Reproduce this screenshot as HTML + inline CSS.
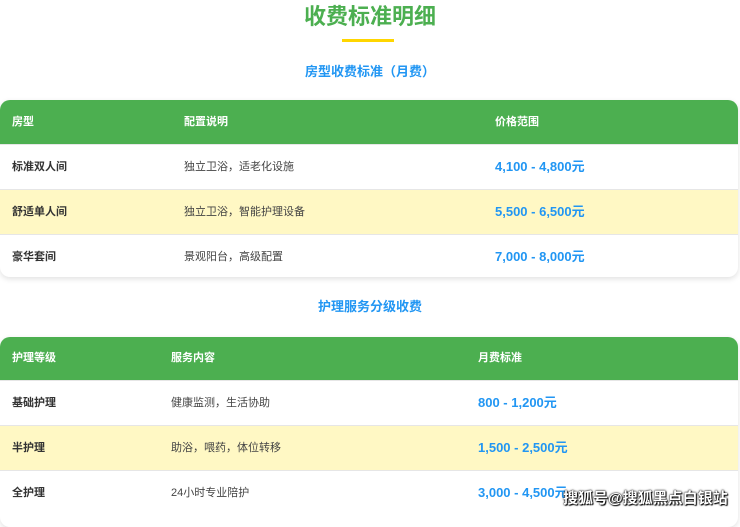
<!DOCTYPE html>
<html><head><meta charset="utf-8">
<style>
*{margin:0;padding:0;box-sizing:border-box}
body{width:740px;height:514px;overflow:hidden;background:#fff;font-family:"Liberation Sans","Noto Sans CJK SC",sans-serif;position:relative}
.t{position:absolute;left:0;width:740px;text-align:center}
h1{top:3px;font-size:22px;font-weight:700;color:#4caf50;line-height:28px}
.bar{position:absolute;left:342px;top:39px;width:52px;height:3px;background:#ffd600}
.sub{font-size:13px;font-weight:700;color:#2196f3;line-height:18px}
.card{position:absolute;left:0;width:738px;border-radius:10px;overflow:hidden;background:#fff;box-shadow:0 2px 6px rgba(0,0,0,.12)}
.row{position:relative;height:45px;border-top:1px solid #e6e6e6;font-size:11px;color:#444}
.row.h{height:44px;background:#4caf50;color:#fff;border-top:none;font-weight:700}
.row.y{background:#fff8c4}
.row span{position:absolute;top:0;line-height:44px}
.c1{font-weight:700;color:#333}
.h .c1{color:#fff}
.p{color:#2196f3;font-weight:700;font-size:13px}
.wm{position:absolute;left:563px;top:487px;font-size:15px;color:#fff;font-weight:700;text-shadow:0 0 2px #000,0 0 1px #000,1px 1px 1px #000;letter-spacing:0}
</style></head><body>
<h1 class="t">收费标准明细</h1>
<div class="bar"></div>
<div class="t sub" style="top:63px">房型收费标准（月费）</div>
<div class="card" style="top:100px">
<div class="row h"><span class="c1" style="left:12px">房型</span><span style="left:184px">配置说明</span><span style="left:495px">价格范围</span></div>
<div class="row"><span class="c1" style="left:12px">标准双人间</span><span style="left:184px">独立卫浴，适老化设施</span><span class="p" style="left:495px">4,100 - 4,800元</span></div>
<div class="row y"><span class="c1" style="left:12px">舒适单人间</span><span style="left:184px">独立卫浴，智能护理设备</span><span class="p" style="left:495px">5,500 - 6,500元</span></div>
<div class="row" style="height:43px"><span class="c1" style="left:12px">豪华套间</span><span style="left:184px">景观阳台，高级配置</span><span class="p" style="left:495px">7,000 - 8,000元</span></div>
</div>
<div class="t sub" style="top:298px">护理服务分级收费</div>
<div class="card" style="top:337px;height:190px">
<div class="row h" style="height:43px"><span class="c1" style="left:12px;line-height:43px">护理等级</span><span style="left:171px;line-height:43px">服务内容</span><span style="left:478px;line-height:43px">月费标准</span></div>
<div class="row"><span class="c1" style="left:12px">基础护理</span><span style="left:171px">健康监测，生活协助</span><span class="p" style="left:478px">800 - 1,200元</span></div>
<div class="row y"><span class="c1" style="left:12px">半护理</span><span style="left:171px">助浴，喂药，体位转移</span><span class="p" style="left:478px">1,500 - 2,500元</span></div>
<div class="row"><span class="c1" style="left:12px">全护理</span><span style="left:171px">24小时专业陪护</span><span class="p" style="left:478px">3,000 - 4,500元</span></div>
</div>
<div class="wm">搜狐号@搜狐黑点白银站</div>
</body></html>
